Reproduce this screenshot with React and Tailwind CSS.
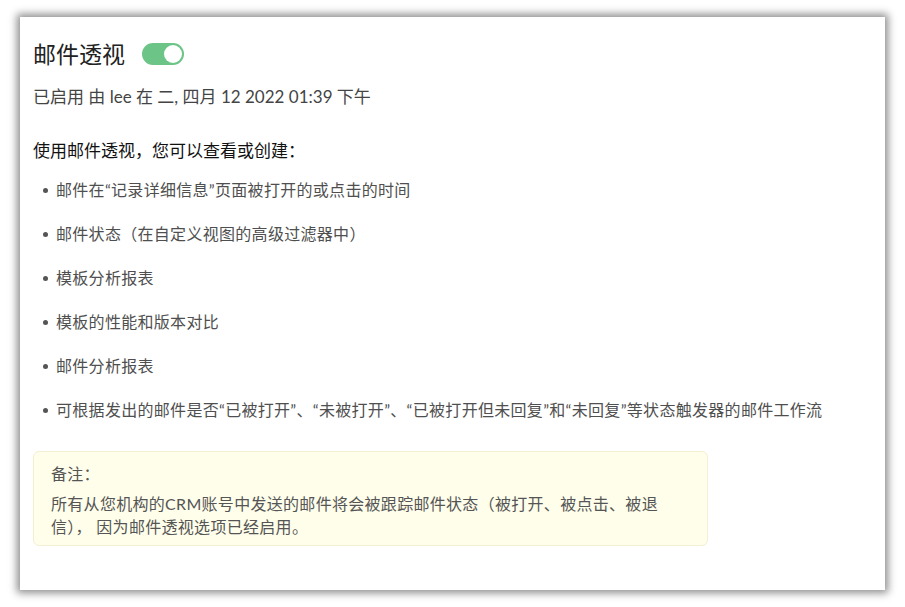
const FONT = { fontFamily: 'Lato, "Noto Sans CJK SC", sans-serif' }

const items = [
  '邮件在“记录详细信息”页面被打开的或点击的时间',
  '邮件状态（在自定义视图的高级过滤器中）',
  '模板分析报表',
  '模板的性能和版本对比',
  '邮件分析报表',
  '可根据发出的邮件是否“已被打开”、“未被打开”、“已被打开但未回复”和“未回复”等状态触发器的邮件工作流',
]

function Toggle() {
  return (
    <span className="ml-[17px] inline-flex h-[22px] w-[42px] items-center justify-end rounded-full bg-[#6cc487] pr-[2px]">
      <span className="h-[18px] w-[18px] rounded-full bg-white" />
    </span>
  )
}

export default function App() {
  return (
    <div className="min-h-[607px] w-[905px] bg-white pl-[20px] pt-[17px]" style={FONT}>
      <div className="h-[573px] w-[865px] bg-white pl-[13px] pt-[22px] shadow-[0_0_8px_3px_rgba(0,0,0,0.45)]">
        <div className="flex h-[30px] items-center">
          <h1 className="text-[23px] leading-[30px] text-[#222]">邮件透视</h1>
          <Toggle />
        </div>

        <p className="mt-[16px] text-[17px] leading-[24px] text-[#444]">
          已启用 由 lee 在 二, 四月 12 2022 01:39 下午
        </p>

        <p className="mt-[30px] text-[17px] leading-[24px] text-[#111]">
          使用邮件透视，您可以查看或创建：
        </p>

        <ul className="mt-[15px] flex flex-col gap-[20px] pl-[10px]">
          {items.map((t) => (
            <li key={t} className="flex items-center text-[16px] leading-[24px] tracking-[0.3px] text-[#4f4f4f]">
              <span className="mr-[8px] h-[5px] w-[5px] shrink-0 rounded-full bg-[#555]" />
              {t}
            </li>
          ))}
        </ul>

        <div className="mt-[29px] h-[95px] w-[675px] rounded-[6px] border border-[#f4efd2] bg-[#fffeeb] px-[17px] pt-[10px]">
          <p className="text-[16px] leading-[24px] tracking-[0.3px] text-[#555]">备注：</p>
          <p className="mt-[6px] text-[16px] leading-[23px] tracking-[0.3px] text-[#555]">
            所有从您机构的CRM账号中发送的邮件将会被跟踪邮件状态（被打开、被点击、被退信）， 因为邮件透视选项已经启用。
          </p>
        </div>
      </div>
    </div>
  )
}
